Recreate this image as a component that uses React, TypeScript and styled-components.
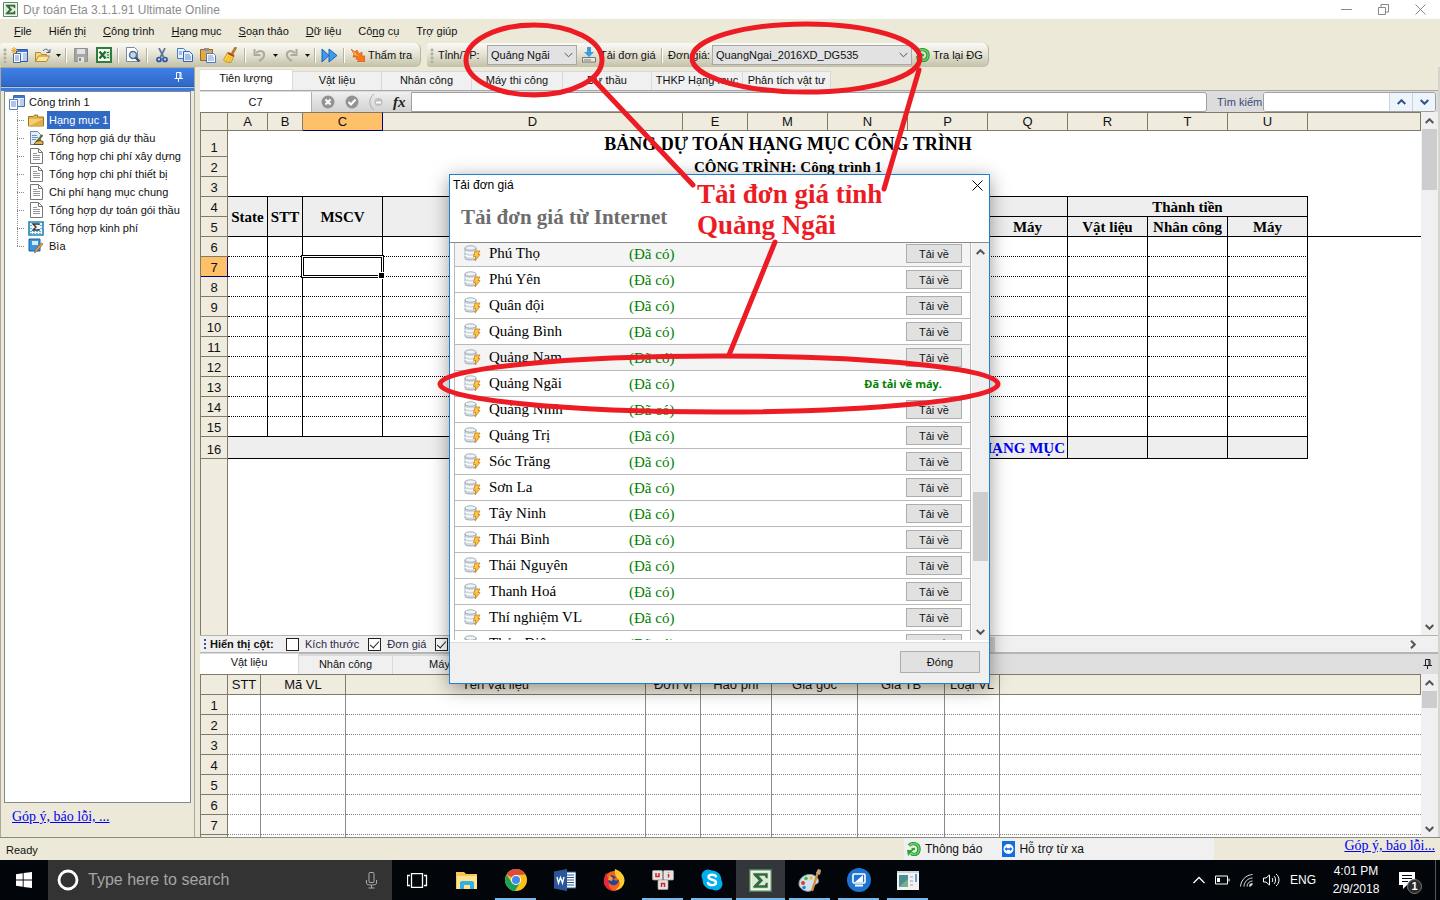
import React from "react";
import styled, { createGlobalStyle, css } from "styled-components";

const sans = '"Liberation Sans", Arial, sans-serif';
const serif = '"Liberation Serif", "Times New Roman", serif';
const beige = "#ece9d8";
const head = "#efebde";
const headLine = "#7f7b66";
const red = "#ed1c24";

const Global = createGlobalStyle`
  * { box-sizing: border-box; }
  html, body { margin: 0; padding: 0; }
  body { font-family: ${sans}; font-size: 11px; color: #111; background: ${beige}; }
  button, input, select { font: inherit; color: inherit; margin: 0; padding: 0; border-radius: 0; }
  button { border: 0; background: none; }
  svg { display: block; flex: none; }
`;

const Screen = styled.div`
  position: relative;
  display: flex;
  flex-direction: column;
  height: 100vh;
  min-height: 700px;
  overflow: hidden;
`;

/* ---------- window frame ---------- */
const TitleBar = styled.header`
  display: flex;
  align-items: center;
  height: 19px;
  padding: 0 14px 0 3px;
  gap: 5px;
  background: #fff;
  color: #8c8c8c;
  font-size: 12px;
`;
const Title = styled.h1`
  flex: 1;
  margin: 0;
  font-size: 12px;
  font-weight: 400;
`;
const WindowButtons = styled.div`
  display: flex;
  gap: 26px;
`;
const MenuBar = styled.nav`
  display: flex;
  align-items: center;
  gap: 17px;
  height: 24px;
  padding-left: 14px;
`;
const MenuItem = styled.button`
  white-space: nowrap;
`;
const Toolbars = styled.div`
  display: flex;
  gap: 6px;
  height: 24px;
`;
const Strip = styled.div`
  display: flex;
  align-items: center;
  height: 24px;
  padding-right: 9px;
  border-radius: 3px 6px 6px 3px;
  border-right: 1px solid #b8b5a0;
  background: linear-gradient(#fbfaf6, #e6e4d6 45%, #c3c1a8);
`;
const Grip = styled.span`
  width: 8px;
  height: 15px;
  flex: none;
  background: radial-gradient(circle at 5px 2px, #b3af9b 1px, transparent 2px) 0 0 / 8px 4px;
`;
const ToolButton = styled.button<{ $w?: number }>`
  display: flex;
  align-items: center;
  justify-content: center;
  width: ${(p) => p.$w ?? 23}px;
  height: 22px;
`;
const Divider = styled.span`
  width: 6px;
  height: 15px;
  flex: none;
  background: linear-gradient(#b5b29d, #b5b29d) 2px 0 / 1px 100% no-repeat,
    linear-gradient(#fff, #fff) 3px 0 / 1px 100% no-repeat;
`;
const TextTool = styled.button<{ $w: number }>`
  display: flex;
  align-items: center;
  gap: 3px;
  width: ${(p) => p.$w}px;
  height: 22px;
  padding-left: 4px;
  white-space: nowrap;
`;
const ToolLabel = styled.label<{ $w: number }>`
  width: ${(p) => p.$w}px;
  padding-left: 3px;
  white-space: nowrap;
`;
const Combo = styled.span<{ $w: number }>`
  position: relative;
  width: ${(p) => p.$w}px;
  height: 20px;
  select {
    appearance: none;
    width: 100%;
    height: 20px;
    padding: 0 16px 0 3px;
    border: 1px solid #a8a8a8;
    background: #e2e2e2;
  }
  svg {
    position: absolute;
    right: 4px;
    top: 7px;
    pointer-events: none;
  }
`;

/* ---------- left panel ---------- */
const Work = styled.div`
  flex: 1;
  min-height: 0;
  display: flex;
  gap: 5px;
  border-bottom: 1px solid #8a8a80;
`;
const Side = styled.aside`
  display: flex;
  flex-direction: column;
  flex: 0 0 195px;
  border: 1px solid #aca899;
  border-bottom: 0;
`;
const SideHead = styled.div`
  display: flex;
  align-items: center;
  justify-content: flex-end;
  height: 19px;
  padding-right: 10px;
  background: linear-gradient(#3f80ea, #3068c4);
  border-bottom: 1px solid #2a5cb0;
`;
const SideStripe = styled.div`
  height: 4px;
  border-top: 1px solid #b8c4d8;
  background: #3a7ce4;
`;
const TreeBox = styled.div`
  flex: 1;
  min-height: 0;
  margin: 0 3px;
  padding: 1px 0 0 4px;
  overflow: hidden;
  background: #fff;
  border: 1px solid #828790;
`;
const TreeRow = styled.div<{ $root?: boolean }>`
  display: flex;
  align-items: center;
  height: 18px;
  gap: ${(p) => (p.$root ? 2 : 3)}px;
  white-space: nowrap;
`;
const Branch = styled.span<{ $last?: boolean }>`
  width: 16px;
  height: 18px;
  flex: none;
  background: repeating-linear-gradient(90deg, #888 0 1px, transparent 1px 2px) 8px 9px / 8px 1px no-repeat,
    repeating-linear-gradient(#888 0 1px, transparent 1px 2px) 8px 0 / 1px ${(p) => (p.$last ? 9 : 18)}px no-repeat;
`;
const TreeIcon = styled.span`
  width: 16px;
  flex: none;
`;
const TreeLabel = styled.span<{ $on?: boolean }>`
  line-height: 18px;
  padding: 0 2px;
  ${(p) => p.$on && css`
    background: #316ac5;
    color: #fff;
  `}
`;
const Feedback = styled.a`
  font-family: ${serif};
  font-size: 14px;
  line-height: 16px;
  color: #0000f0;
  white-space: nowrap;
`;
const SideFoot = styled.div`
  height: 34px;
  padding: 6px 11px;
`;

/* ---------- main column ---------- */
const Main = styled.main`
  flex: 1;
  min-width: 0;
  display: flex;
  flex-direction: column;
  border-right: 2px solid #d6d4cc;
`;
const Tabs = styled.div<{ $gray?: boolean }>`
  display: flex;
  align-items: flex-end;
  height: ${(p) => (p.$gray ? 20 : 23)}px;
  flex: none;
  background: ${(p) => (p.$gray ? "#dedede" : beige)};
`;
const Tab = styled.button<{ $w: number; $on?: boolean }>`
  width: ${(p) => p.$w}px;
  height: ${(p) => (p.$on ? 21 : 19)}px;
  padding: 0 0 ${(p) => (p.$on ? 4 : 2)}px;
  flex: none;
  white-space: nowrap;
  background: ${(p) => (p.$on ? "#fff" : "#f0f0f0")};
  border: 1px solid #d9d9d9;
  border-width: 1px 1px 0 0;
`;
const PinEnd = styled.span`
  margin: 0 5px 5px auto;
`;
const FormulaRow = styled.div`
  display: flex;
  align-items: center;
  height: 22px;
  flex: none;
  background: #dcdcdc;
  border-top: 1px solid #a7a7a7;
  color: #3b4a77;
`;
const NameBox = styled.input`
  width: 112px;
  height: 20px;
  border: 0;
  border-right: 1px solid #b0b0b0;
  background: #fff;
  color: #111;
  text-align: center;
`;
const FormulaTools = styled.div`
  display: flex;
  align-items: center;
  gap: 10px;
  width: 99px;
  height: 20px;
  padding-left: 9px;
  background: linear-gradient(#efefef, #d2d2d2);
`;
const Fx = styled.i`
  font: italic bold 15px/16px ${serif};
  color: #222;
`;
const FormulaInput = styled.input`
  flex: 1;
  min-width: 0;
  height: 20px;
  border: 1px solid #a0a0a0;
  border-radius: 0 3px 3px 0;
  background: #fff;
`;
const SearchLabel = styled.label`
  width: 56px;
  padding-left: 10px;
  white-space: nowrap;
`;
const SearchBox = styled.div`
  display: flex;
  width: 173px;
  height: 20px;
  margin-right: 2px;
  border: 1px solid #a0a0a0;
  border-radius: 3px;
  background: #fff;
  overflow: hidden;
  input {
    flex: 1;
    min-width: 0;
    border: 0;
  }
  button {
    display: flex;
    align-items: center;
    justify-content: center;
    width: 23px;
    border-left: 1px solid #ccd3dd;
    background: #eef4fb;
  }
`;
const SheetFrame = styled.div<{ $bottom?: boolean }>`
  display: flex;
  ${(p) => (p.$bottom ? "flex: 0 0 163px;" : "flex: 1;")}
  min-height: 0;
`;
const Sheet = styled.div`
  flex: 1;
  min-width: 0;
  display: flex;
  flex-direction: column;
  overflow: hidden;
  background: #fff;
  border-left: 1px solid ${headLine};
`;
const Gutter = styled.div`
  flex: 1;
  width: 27px;
  background: ${head};
  border-right: 1px solid ${headLine};
`;
const Grid = styled.table`
  table-layout: fixed;
  width: 100%;
  flex: none;
  border-collapse: separate;
  border-spacing: 0;
  font-size: 13px;
  td, th {
    padding: 0;
    overflow: hidden;
    white-space: nowrap;
    line-height: 18px;
  }
  && th { line-height: 17px; }
`;
const ColHead = styled.th<{ $on?: boolean }>`
  font-weight: 400;
  background: ${(p) => (p.$on ? "#ffc06a" : head)};
  border: solid ${headLine};
  border-width: 1px 1px 1px 0;
  ${(p) => p.$on && "border-right-color: #00007a; border-bottom-color: #00007a;"}
`;
const RowHead = styled.th<{ $on?: boolean }>`
  font-weight: 400;
  vertical-align: bottom;
  background: ${(p) => (p.$on ? "#ffc06a" : head)};
  border: solid ${headLine};
  border-width: 0 1px 1px 0;
  ${(p) => p.$on && "border-right-color: #00007a; border-bottom-color: #00007a;"}
`;
const Row = styled.tr<{ $h?: number }>`
  height: ${(p) => p.$h ?? 20}px;
`;
const Cell = styled.td<{ $line?: string; $right?: boolean; $fill?: boolean; $size?: number; $tint?: string; $end?: boolean }>`
  font-family: ${serif};
  font-weight: 700;
  font-size: ${(p) => p.$size ?? 15}px;
  text-align: ${(p) => (p.$end ? "right" : "center")};
  color: ${(p) => p.$tint ?? "#000"};
  background: ${(p) => (p.$fill ? "#eeeeee" : "#fff")};
  border-bottom: ${(p) => p.$line ?? "0"};
  border-right: ${(p) => (p.$right ? "1px solid #000" : "0")};
  && { padding-right: ${(p) => (p.$end ? 2 : 0)}px; }
`;
const ActiveCell = styled(Cell)`
  && { overflow: visible; }
  position: relative;
  &::before {
    content: "";
    position: absolute;
    inset: -1px;
    border: 1px solid #fff;
    outline: 1px solid #000;
    box-shadow: inset 0 0 0 1px #000;
  }
  &::after {
    content: "";
    position: absolute;
    right: -3px;
    bottom: -3px;
    width: 5px;
    height: 5px;
    background: #000;
    border: 1px solid #fff;
  }
`;
const LightCell = styled.td<{ $open?: boolean }>`
  border-bottom: 1px dotted #808080;
  border-right: ${(p) => (p.$open ? "0" : "1px solid #8a8a8a")};
`;
const VBar = styled.div<{ $w?: number }>`
  display: flex;
  flex-direction: column;
  align-items: center;
  width: ${(p) => p.$w ?? 17}px;
  padding: 0 1px;
  flex: none;
  background: #f0f0f0;
`;
const ArrowBox = styled.button`
  display: flex;
  align-items: center;
  justify-content: center;
  width: 15px;
  height: 17px;
  flex: none;
`;
const Track = styled.div`
  flex: 1;
  width: 100%;
`;
const Thumb = styled.div<{ $top: string; $h: number }>`
  height: ${(p) => p.$h}px;
  margin-top: ${(p) => p.$top};
  background: #cdcdcd;
`;
const FilterRow = styled.div`
  display: flex;
  align-items: center;
  height: 17px;
  flex: none;
  overflow: hidden;
  background: #f0f0f0;
  border-top: 1px solid #b5b5a5;
  white-space: nowrap;
`;
const FilterTools = styled.div`
  display: flex;
  align-items: center;
  flex: 0 0 580px;
  padding-left: 4px;
`;
const FilterTitle = styled.b`
  width: 79px;
  padding-left: 3px;
`;
const Check = styled.label`
  display: flex;
  align-items: center;
  gap: 6px;
  margin-right: 9px;
  color: #2b2b4a;
  input {
    appearance: none;
    position: relative;
    width: 13px;
    height: 13px;
    background: #fff;
    border: 1px solid #222;
  }
  input:checked::after {
    content: "";
    position: absolute;
    left: 3px;
    top: 0;
    width: 4px;
    height: 8px;
    border: solid #222;
    border-width: 0 1px 1px 0;
    transform: rotate(42deg);
  }
`;
const HTrack = styled.div`
  display: flex;
  flex: 1;
  align-items: center;
  justify-content: space-between;
  padding-right: 18px;
`;
const HThumb = styled.div`
  width: 215px;
  height: 15px;
  background: #cdcdcd;
`;
const Splitter = styled.div`
  height: 2px;
  flex: none;
  background: #b5b5b5;
`;

/* ---------- status bar and task bar ---------- */
const StatusBar = styled.footer`
  display: flex;
  height: 22px;
  flex: none;
  padding-left: 6px;
  line-height: 24px;
`;
const StatusText = styled.span`
  flex: 1;
`;
const StatusPane = styled.div`
  display: flex;
  align-items: center;
  gap: 20px;
  width: 310px;
  padding-left: 3px;
  background: #f0f0f0;
  font-size: 12px;
`;
const StatusButton = styled.button`
  display: flex;
  align-items: center;
  gap: 4px;
`;
const StatusLink = styled.div`
  width: 226px;
  padding-right: 5px;
  line-height: 16px;
  text-align: right;
`;
const TaskBar = styled.div`
  display: flex;
  height: 40px;
  flex: none;
  background: #020509;
  color: #fff;
`;
const StartButton = styled.button`
  display: flex;
  align-items: center;
  justify-content: center;
  width: 48px;
`;
const TaskSearch = styled.label`
  display: flex;
  align-items: center;
  gap: 9px;
  width: 344px;
  padding: 0 12px 0 9px;
  background: #333;
  input {
    flex: 1;
    min-width: 0;
    border: 0;
    background: none;
    font-size: 16px;
    &::placeholder { color: #a5a5a5; opacity: 1; }
  }
`;
const TaskButton = styled.button<{ $open?: boolean; $on?: boolean }>`
  position: relative;
  display: flex;
  align-items: center;
  justify-content: center;
  width: 49px;
  background: ${(p) => (p.$on ? "#33373b" : "none")};
  ${(p) => p.$open && css`
    &::after {
      content: "";
      position: absolute;
      bottom: 0;
      left: ${p.$on ? 0 : 4}px;
      right: ${p.$on ? 0 : 4}px;
      height: 2px;
      background: #76b9ed;
    }
  `}
`;
const Apps = styled.div`
  display: flex;
  padding-left: 1px;
`;
const Tray = styled.div`
  display: flex;
  align-items: center;
  gap: 10px;
  margin-left: auto;
  padding-right: 4px;
  font-size: 12px;
`;
const Clock = styled.time`
  width: 60px;
  line-height: 18px;
  text-align: center;
`;
const Notice = styled.span`
  position: relative;
  width: 40px;
  height: 40px;
  padding: 12px 0 0 3px;
  border-right: 1px solid #55585c;
  b {
    position: absolute;
    left: 11px;
    top: 19px;
    width: 15px;
    height: 15px;
    border-radius: 8px;
    border: 1px solid #777;
    background: #2a2a2a;
    font-size: 11px;
    line-height: 13px;
    text-align: center;
  }
`;

/* ---------- dialog and mark-up over the page ---------- */
const Overlay = styled.div`
  position: absolute;
  inset: 0 0 40px;
  display: flex;
  align-items: center;
  justify-content: center;
  padding: 0 1px 2px 0;
`;
const Dialog = styled.section`
  display: flex;
  flex-direction: column;
  width: 541px;
  height: 510px;
  border: 1px solid #1f7fd0;
  background: #fff;
  box-shadow: 0 4px 18px rgba(0, 0, 0, 0.4);
`;
const DialogBar = styled.div`
  display: flex;
  align-items: center;
  justify-content: space-between;
  height: 20px;
  padding: 0 6px 0 3px;
  font-size: 12px;
  color: #000;
`;
const DialogTitle = styled.h2`
  height: 48px;
  margin: 0;
  padding: 10px 11px 0;
  font: bold 21px/24px ${serif};
  color: #6d6d6d;
  border-bottom: 1px solid #8a8a8a;
`;
const ListFrame = styled.div`
  display: flex;
  height: 397px;
  padding-left: 4px;
  overflow: hidden;
`;
const List = styled.ul`
  flex: 1;
  display: flex;
  flex-direction: column;
  margin: 0 1px 0 0;
  padding: 0;
  list-style: none;
  overflow: hidden;
  border: solid #b9b9b9;
  border-width: 0 1px;
`;
const Item = styled.li<{ $tone?: boolean }>`
  display: flex;
  align-items: center;
  flex: none;
  height: 26px;
  padding: 0 8px 0 9px;
  background: ${(p) => (p.$tone ? "#f4f4f4" : "#fff")};
  border-bottom: 1px solid #b9b9b9;
  font: 15px/22px ${serif};
  color: #000;
  &:first-child {
    height: 24px;
    padding-bottom: 2px;
  }
`;
const ItemName = styled.span`
  width: 148px;
  padding: 0 0 2px 8px;
`;
const ItemState = styled.span`
  flex: 1;
  color: #008000;
`;
const PushButton = styled.button<{ $w: number; $h: number }>`
  width: ${(p) => p.$w}px;
  height: ${(p) => p.$h}px;
  font: 11px/16px ${sans};
  color: #111;
  background: #e1e1e1;
  border: 1px solid #adadad;
`;
const Done = styled.strong`
  padding-right: 20px;
  font: bold 11px/16px "Open Sans", ${sans};
  color: #008000;
`;
const DialogFoot = styled.div`
  display: flex;
  justify-content: flex-end;
  flex: 1;
  margin-top: 2px;
  padding: 8px 9px;
  background: #f0f0f0;
  border-top: 1px solid #dcdcdc;
`;
const Ink = styled.svg`
  position: absolute;
  left: 50%;
  top: 0;
  margin-left: -720px;
  pointer-events: none;
`;
const InkNote = styled.p`
  position: absolute;
  left: 50%;
  top: 179px;
  width: 200px;
  margin: 0 0 0 -23px;
  font: bold 27px/31px ${serif};
  color: ${red};
`;

/* ---------- drawings ---------- */
const Sigma = ({ s = 16 }: { s?: number }) => (
  <svg width={s} height={s} viewBox="0 0 16 16">
    <path d="M.5.5h15v15H.5z" fill="#f3f7ee" stroke="#4c8054" />
    <path d="M2 2h12v12H2z" fill="#dfe8d6" />
    <path d="M3 3h10v3.500h-1.200L11 4.700H6.800L9.800 8l-3.300 3.300H11l.8-1.800H13V13H3v-1L6.800 8 3 4z" fill="#2f6b3c" />
  </svg>
);
const Chev = ({ up, c = "#555", w = 9, sw = 2 }: { up?: boolean; c?: string; w?: number; sw?: number }) => (
  <svg width={w} height="6" viewBox="0 0 9 6" fill="none" stroke={c} strokeWidth={sw}>
    <path d={up ? "M.7 5 4.500 1.200 8.300 5" : "M.7 1 4.500 4.800 8.300 1"} />
  </svg>
);
const Caret = () => (
  <svg width="5" height="3"><path d="M0 0h5L2.500 3z" fill="#111" /></svg>
);
const Pin = ({ c }: { c: string }) => (
  <svg width="10" height="10" fill="none" stroke={c}>
    <path d="M2.500 .5h4.500v5.500M2.500 .5v5.500M6 .5v5.500M.5 6.500h8.500M4.500 7v3" />
  </svg>
);
const Project = () => (
  <svg width="16" height="16">
    <path d="M4.500 1.500h11v11h-11z" fill="#e8f0fc" stroke="#4469ab" />
    <path d="M5 2h10v2H5z" fill="#3d75d6" />
    <path d="M11 5h4v7h-4z" fill="#b9cdec" />
    <path d="M.5 5.500h8v10h-8z" fill="#fff" stroke="#5a7db4" />
    <path d="M2 8h5M2 10h5M2 12h5" stroke="#5d8bd8" />
  </svg>
);
const NewProject = () => (
  <svg width="17" height="16">
    <path d="M5.500 2.500h11v12h-11z" fill="#e8f0fc" stroke="#35579a" />
    <path d="M6 3h10v2H6z" fill="#3d75d6" />
    <path d="M12 6h4v8h-4z" fill="#b9cdec" />
    <path d="M2.500 6.500h7v9h-7z" fill="#fff" stroke="#4469ab" />
    <path d="M4 9h4M4 11h4M4 13h4" stroke="#5d8bd8" />
    <path d="M3 0v7M0 3.500h7M1 1l4 5M5 1 1 6" stroke="#f1a522" />
  </svg>
);
const FolderOpen = () => (
  <svg width="17" height="15">
    <path d="M1.500 13.500v-9h5l1 2h5v2" fill="#f7d77e" stroke="#b98a2c" />
    <path d="M1.500 13.500 4.500 8h11l-3 5.500z" fill="#fbe7a4" stroke="#b98a2c" />
    <path d="M9 3c2-3 5-2 6 1m1-3v3.500h-3.500" fill="none" stroke="#4d5d7a" />
  </svg>
);
const Save = () => (
  <svg width="14" height="14">
    <path d="M.5.5h13v13H.5z" fill="#a5a5a5" stroke="#909090" />
    <path d="M3 1h8v5H3zM4 9h6v5H4z" fill="#e2e2e2" /><path d="M5 10h2v3H5z" fill="#888" />
  </svg>
);
const Excel = () => (
  <svg width="16" height="16">
    <path d="M1 1h14v14H1z" fill="#fff" stroke="#2f7d3b" strokeWidth="2" />
    <path d="M9 4h5v8H9z" fill="#cfe6cf" />
    <path d="m3.500 4.500 6 7m0-7-6 7" stroke="#22702f" strokeWidth="2.400" />
    <path d="M11 5.500h2M11 8h2M11 10.500h2" stroke="#2f7d3b" />
  </svg>
);
const Preview = () => (
  <svg width="16" height="16">
    <path d="M1.500.5h8l3 3v11h-11z" fill="#fff" stroke="#7b8aa3" />
    <circle cx="8" cy="8" r="3.500" fill="#b9dcf4" stroke="#5a6f8d" strokeWidth="1.500" />
    <path d="m10.500 10.500 4 4" stroke="#3d4e69" strokeWidth="2.400" />
  </svg>
);
const Cut = () => (
  <svg width="12" height="15" fill="none">
    <path d="M3 0 7.500 9M9 0 4.500 9" stroke="#5f7596" strokeWidth="1.700" />
    <circle cx="3" cy="11.500" r="2" stroke="#2858ad" strokeWidth="1.700" /><circle cx="9" cy="11.500" r="2" stroke="#2858ad" strokeWidth="1.700" />
  </svg>
);
const Copy = () => (
  <svg width="16" height="14">
    <path d="M.5.5h6l2 2v8h-8z" fill="#e6effc" stroke="#4d78bf" />
    <path d="M6.500 3.500h6l3 3v7h-9z" fill="#e6effc" stroke="#3564b4" />
    <path d="M2 4h3M2 6h3M8 7h5M8 9h6M8 11h6" stroke="#5d8bd8" />
  </svg>
);
const Paste = () => (
  <svg width="16" height="15">
    <path d="M.5 1.500h12v11H.5z" fill="#e2a94b" stroke="#96671f" /><path d="M4 0h5v3H4z" fill="#8592a8" />
    <path d="M6.500 5.500h7l2 2v7h-9z" fill="#fff" stroke="#4d78bf" /><path d="M8 8h5M8 10h6M8 12h6" stroke="#6a94d8" />
  </svg>
);
const Broom = () => (
  <svg width="15" height="16">
    <path d="m13 0-4 7" stroke="#b7792d" strokeWidth="2.600" />
    <path d="M4.500 5.500 11 9 8 15.500 3 15 .5 13z" fill="#fbd94e" stroke="#c99612" /><path d="m5 6 6 3" stroke="#c43e20" strokeWidth="2" />
    <path d="m6 9-3 5M8 10l-2 5" stroke="#e0a81c" />
  </svg>
);
const Undo = ({ flip }: { flip?: boolean }) => (
  <svg width="13" height="14">
    <g transform={flip ? "matrix(-1 0 0 1 13 0)" : undefined} fill="none" stroke="#adaa9b" strokeWidth="2">
      <path d="M3 5c5-4 9-1 8 3-.5 2-2 3.500-5 5" /><path d="M1.500 1v6h6" />
    </g>
  </svg>
);
const Forward = () => (
  <svg width="17" height="15" fill="#3f9bf0" stroke="#1960b8">
    <path d="M1 1v13l7-6.500zM8 1v13l8-6.500z" />
  </svg>
);
const Verify = () => (
  <svg width="14" height="13">
    <path d="m0 0 4 3 2-2 2 4 3-2v4l3 0v6H6l2-2-3-1 1-2H2l1-3z" fill="#f57a1e" stroke="#d8481a" strokeWidth=".6" /><path d="m1 1 5 5 2 1-4-1z" fill="#ffd24a" />
  </svg>
);
const Download = () => (
  <svg width="16" height="16">
    <path d="M6 0h4v5h3L8 10 3 5h3z" fill="#3b9ee0" /><path d="M1.500 10.500h13v4.500h-13z" fill="#e9e9e3" stroke="#777" /><path d="M3 13h7" stroke="#777" />
  </svg>
);
const Refresh = () => (
  <svg width="14" height="14" fill="none">
    <path d="M2 3.500C5 .5 12 1 12 7s-5 6-8 4.500" stroke="#1f9429" strokeWidth="3.400" />
    <path d="M2 3.500C5 .5 12 1 12 7s-5 6-8 4.500" stroke="#62d264" strokeWidth="1.600" />
    <path d="M4.500 7H8" stroke="#2aa733" strokeWidth="2.400" />
    <path d="M0 8h6.500L1 14z" fill="#2aa733" />
  </svg>
);
const Folder = () => (
  <svg width="16" height="13"><path d="M.5 2.500h5l1-1.500h3v2h6v9H.5z" fill="#e2b44c" stroke="#9c7423" /><path d="M1 5h14v7H1z" fill="#f3cf73" /><path d="m1 12 14-7v7z" fill="#dfae45" /></svg>
);
const Doc = () => (
  <svg width="16" height="16"><path d="M2.500.5h8l4 4v11h-12z" fill="#fff" stroke="#777" /><path d="M10.500.5v4h4" fill="none" stroke="#777" /><path d="M5 5.500h4M5 7.500h7M5 9.500h7M5 11.500h7" stroke="#999" /></svg>
);
const DocPen = () => (
  <svg width="16" height="15"><path d="M2.500.5h7l3 3v10h-10z" fill="#e3ecf8" stroke="#6d85a8" /><path d="M4 4.500h5M4 6.500h6M4 8.500h4" stroke="#6d93c9" /><path d="m14.500 4-6 7" stroke="#6a6a3a" strokeWidth="2" /><path d="M6 13.500h9v-3l-3-1-4 1z" fill="#e1b640" stroke="#54502c" /></svg>
);
const SumDoc = () => (
  <svg width="16" height="15"><path d="M1 1h14v13H1z" fill="#eef6fc" stroke="#2186b5" strokeWidth="1.600" /><path d="M2 10.500h12M2 12.500h12M2 4.500h2m8 0h2M2 7.500h2m8 0h2" stroke="#6ab0dc" strokeDasharray="2 1" /><path d="M11 4V3H5l3 3-3 3h6V8" fill="none" stroke="#333" strokeWidth="1.400" /></svg>
);
const Book = () => (
  <svg width="16" height="16"><path d="M1 1h11v12H1z" fill="#3a96dc" stroke="#1d5f9e" /><path d="M4 3h6v4H4z" fill="#d5ebfa" /><path d="m15 6-6 7-2.500 2 .8-3 6-7z" fill="#f6a24b" stroke="#8b5a2a" strokeWidth=".7" /></svg>
);
const Database = () => (
  <svg width="17" height="17">
    <path d="M1 3v10.500C2 15.500 11 15.500 12 13.500V3z" fill="#d3dbe2" stroke="#8e9ba6" strokeWidth=".8" />
    <ellipse cx="6.500" cy="3" rx="5.500" ry="2.200" fill="#eef3f6" stroke="#8e9ba6" strokeWidth=".8" />
    <path d="M1 6.500c1 2 10 2 11 0M1 10c1 2 10 2 11 0" fill="none" stroke="#fff" strokeWidth="1.300" />
    <path d="M11 6h5l-2 3.500h2L11 16l.8-4.500H9.500z" fill="#fbc640" stroke="#cf7d1b" strokeWidth=".8" />
  </svg>
);
const Close = ({ c = "#000", s = 11 }: { c?: string; s?: number }) => (
  <svg width={s} height={s} viewBox="0 0 11 11" stroke={c}><path d="m.5.5 10 10m0-10-10 10" /></svg>
);
const Viewer = () => (
  <svg width="13" height="16"><path d="M0 0h13v16H0z" fill="#0f6fe0" /><circle cx="6.500" cy="8" r="5" fill="#fff" /><path d="m2.500 8 2.500-2v1.300h3V6l2.500 2L8 10V8.700H5V10z" fill="#0f6fe0" /></svg>
);
const icons: Record<string, React.ReactNode> = {
  view: <svg width="21" height="15" fill="none" stroke="#fff"><path d="M4.500.5h11v14h-11zM3 2.500H.5v10H3M17 2.500h2.500v10H17" strokeWidth="1.300" /></svg>,
  files: <svg width="22" height="19"><path d="M0 1h8l2 2h11v15H0z" fill="#f5c74c" /><path d="M1 5h20v13H1z" fill="#fde491" /><path d="M4 18v-7l2-1h10l2 1v7h-4v-4H8v4z" fill="#35aee4" /></svg>,
  chrome: <svg width="22" height="22"><circle cx="11" cy="11" r="11" fill="#fbc116" /><path d="M11 11 1.500 5.500A11 11 0 0 1 20.500 5.500L11 6z" fill="#dd4b3e" /><path d="M1.500 5.500A11 11 0 0 0 10 22l5-8.500-8.500-.5z" fill="#1ba05a" /><circle cx="11" cy="11" r="5" fill="#fff" /><circle cx="11" cy="11" r="4" fill="#4688f1" /></svg>,
  word: <svg width="22" height="22"><path d="M11 3h11v16H11z" fill="#fff" stroke="#2b579a" /><path d="M13 6h7M13 8.500h7M13 11h7M13 13.500h7M13 16h7" stroke="#2b579a" /><path d="M0 2.500 13 0v22L0 19.500z" fill="#2b579a" /><path d="m3 8 1.500 6L6.500 8.500 8.500 14 10 8" fill="none" stroke="#fff" strokeWidth="1.400" /></svg>,
  fox: <svg width="22" height="22"><circle cx="11" cy="12" r="10" fill="#f5601e" /><path d="M12 0c6 2 10 7 9.500 12S17 21 12 21c5-3 6-7 3-11-2-3-4-5-3-10z" fill="#ffcb2d" /><path d="M3 3c0 3-3 6-2 11s6 8 10 8c-5-3-6-6-5-9z" fill="#e8263d" /><path d="M6 7c3-2 6 0 7 2l-3 1c3 3 6 1 6 0 0 5-4 7-7 6s-5-5-3-9z" fill="#20469c" /><path d="m6 6 4 3-1 3-4-1z" fill="#ff9a25" /></svg>,
  keys: <svg width="22" height="20" fill="#e6e3e3" stroke="#a9a5a5" strokeWidth=".7"><rect x=".5" y=".5" width="10" height="9.500" rx="1" /><rect x="11.500" y=".5" width="10" height="9.500" rx="1" /><rect x="6" y="10" width="10" height="9.500" rx="1" /><path d="M4 3v3.500h3V3M16.500 4v3.500M16.500 2.200v.6M9.500 17v-3.500h3V17" fill="none" stroke="#d6202a" strokeWidth="1.500" /></svg>,
  skype: <svg width="22" height="22"><circle cx="7" cy="7" r="6.500" fill="#00aff0" /><circle cx="15" cy="15" r="6.500" fill="#00aff0" /><circle cx="11" cy="11" r="9.500" fill="#00aff0" /><path d="M15 7.500C14 5 7.500 5 7.500 8c0 3.500 7.500 2 7.500 5.500 0 3.500-7 3.200-8 .5" fill="none" stroke="#fff" strokeWidth="2.400" strokeLinecap="round" /></svg>,
  sigma: <Sigma s={23} />,
  paint: <svg width="24" height="23"><path d="M1 15C1 8 9 4 15 6s7 8 3 9c-3 1-3 2-3 4s-3 4-7 3-7-4-7-7z" fill="#cfe2ec" stroke="#8aa9b9" /><circle cx="5" cy="14" r="2" fill="#d93a2b" /><circle cx="8" cy="9.500" r="1.800" fill="#4db04a" /><circle cx="13" cy="9" r="1.800" fill="#eec22f" /><circle cx="6" cy="18.500" r="1.800" fill="#3c7bd0" /><path d="m20 3-6 19" stroke="#d78b3d" strokeWidth="2.400" /><path d="m18 4 2-4 3 1-1 5z" fill="#c9a57d" /></svg>,
  remote: <svg width="24" height="24"><circle cx="12" cy="12" r="12" fill="#1f74d0" /><rect x="6" y="6" width="12" height="9" rx="1" fill="none" stroke="#fff" strokeWidth="1.600" /><path d="m8 14 8-7v7z" fill="#fff" /><path d="M8 17.500h8" stroke="#fff" strokeWidth="2" /></svg>,
  panel: <svg width="22" height="19"><path d="M0 0h22v19H0z" fill="#f2f2f2" /><path d="M0 0h22v2H0z" fill="#c9d6dc" /><path d="M2 4h9v12H2z" fill="#4d8d96" /><path d="m2 16 9-8v8z" fill="#78b08b" /><path d="M13 6h3M13 10h3M13 14h3" stroke="#c8c8c8" strokeWidth="2" /><path d="M19 3v8" stroke="#2e83d6" strokeWidth="1.500" /></svg>,
};

/* ---------- data ---------- */
const menus = [["", "F", "ile"], ["Hiển ", "t", "hị"], ["", "C", "ông trình"], ["", "H", "ạng mục"], ["", "S", "oạn thảo"], ["", "D", "ữ liệu"], ["Cô", "n", "g cụ"], ["Trợ ", "g", "iúp"]];
const tree: [string, React.ReactNode][] = [
  ["Hạng mục 1", <Folder />], ["Tổng hợp giá dự thầu", <DocPen />], ["Tổng hợp chi phí xây dựng", <Doc />], ["Tổng hợp chi phí thiết bị", <Doc />],
  ["Chi phí hạng mục chung", <Doc />], ["Tổng hợp dự toán gói thầu", <Doc />], ["Tổng hợp kinh phí", <SumDoc />], ["Bìa", <Book />],
];
const sheetTabs: [string, number][] = [["Tiên lượng", 93], ["Vật liệu", 89], ["Nhân công", 90], ["Máy thi công", 91], ["Dự thầu", 89], ["THKP Hạng mục", 91], ["Phân tích vật tư", 88]];
const cols: [string, number][] = [["A", 40], ["B", 35], ["C", 80], ["D", 300], ["E", 65], ["M", 80], ["N", 80], ["P", 80], ["Q", 80], ["R", 80], ["T", 80], ["U", 80]];
const matCols: [string, number][] = [["STT", 33], ["Mã VL", 85], ["Tên vật liệu", 300], ["Đơn vị", 55], ["Hao phí", 71], ["Giá gốc", 86], ["Giá TB", 87], ["Loại VL", 55]];
const provinces = ["Phú Thọ", "Phú Yên", "Quân đội", "Quảng Bình", "Quảng Nam", "Quảng Ngãi", "Quảng Ninh", "Quảng Trị", "Sóc Trăng", "Sơn La", "Tây Ninh", "Thái Bình", "Thái Nguyên", "Thanh Hoá", "Thí nghiệm VL", "Thủy Điện"];
const apps: [string, string, boolean][] = [["view", "Task View", false], ["files", "File Explorer", false], ["chrome", "Chrome", true], ["word", "Word", false], ["fox", "Firefox", false], ["keys", "UniKey", true], ["skype", "Skype", true], ["sigma", "Eta", true], ["paint", "Paint", true], ["remote", "Remote", true], ["panel", "Panel", true]];

const ScrollV = ({ top = "0px", h, w }: { top?: string; h: number; w?: number }) => (
  <VBar $w={w}>
    <ArrowBox aria-label="Lên"><Chev up /></ArrowBox>
    <Track><Thumb $top={top} $h={h} /></Track>
    <ArrowBox aria-label="Xuống"><Chev /></ArrowBox>
  </VBar>
);

const black = "1px solid #000";
const dots = "1px dotted #000";

const Estimate = () => (
  <Grid>
    <colgroup>
      <col style={{ width: 27 }} />
      {cols.map(([n, w]) => <col key={n} style={{ width: w }} />)}
      <col />
    </colgroup>
    <thead>
      <tr>
        <ColHead />
        {cols.map(([n]) => <ColHead key={n} $on={n === "C"}>{n}</ColHead>)}
        <ColHead />
      </tr>
    </thead>
    <tbody>
      <Row $h={26}><RowHead>1</RowHead><Cell /><Cell colSpan={11} $size={18}>BẢNG DỰ TOÁN HẠNG MỤC CÔNG TRÌNH</Cell><Cell /></Row>
      <Row><RowHead>2</RowHead><Cell /><Cell colSpan={11}>CÔNG TRÌNH: Công trình 1</Cell><Cell /></Row>
      <Row><RowHead>3</RowHead><Cell colSpan={12} $line={black} /><Cell /></Row>
      <Row>
        <RowHead>4</RowHead>
        {["State", "STT", "MSCV", "", "", ""].map((t, i) => <Cell key={i} rowSpan={2} $fill $right $line={black}>{t}</Cell>)}
        <Cell colSpan={3} $fill $right $line={black} />
        <Cell colSpan={3} $fill $right $line={black}>Thành tiền</Cell>
        <Cell />
      </Row>
      <Row>
        <RowHead>5</RowHead>
        {["", "", "Máy", "Vật liệu", "Nhân công", "Máy"].map((t, i) => <Cell key={i} $fill $right $line={black}>{t}</Cell>)}
        <Cell $line={black} />
      </Row>
      {Array.from({ length: 10 }, (_, r) => (
        <Row key={r}>
          <RowHead $on={r === 1}>{r + 6}</RowHead>
          {cols.map(([n]) => {
            const C = r === 1 && n === "C" ? ActiveCell : Cell;
            return <C key={n} $right $line={r === 9 ? black : dots} />;
          })}
          <Cell />
        </Row>
      ))}
      <Row $h={22}>
        <RowHead>16</RowHead>
        <Cell colSpan={9} $fill $right $end $line={black} $tint="#0000f0">TỔNG CỘNG HẠNG MỤC</Cell>
        <Cell $fill $right $line={black} /><Cell $fill $right $line={black} /><Cell $fill $right $line={black} /><Cell />
      </Row>
    </tbody>
  </Grid>
);

const Materials = () => (
  <Grid>
    <colgroup>
      <col style={{ width: 27 }} />
      {matCols.map(([n, w]) => <col key={n} style={{ width: w }} />)}
      <col />
    </colgroup>
    <thead>
      <Row $h={21}>
        <ColHead />
        {matCols.map(([n]) => <ColHead key={n}>{n}</ColHead>)}
        <ColHead />
      </Row>
    </thead>
    <tbody>
      {Array.from({ length: 8 }, (_, r) => (
        <Row key={r}>
          <RowHead>{r < 7 && r + 1}</RowHead>
          {matCols.map(([n]) => <LightCell key={n} />)}
          <LightCell $open />
        </Row>
      ))}
    </tbody>
  </Grid>
);

export default function App() {
  return (
    <Screen>
      <Global />
      <TitleBar>
        <Sigma s={15} />
        <Title>Dự toán Eta 3.1.1.91 Ultimate Online</Title>
        <WindowButtons>
          <button aria-label="Thu nhỏ"><svg width="11" height="11" stroke="#888"><path d="M0 5.500h11" /></svg></button>
          <button aria-label="Khôi phục"><svg width="11" height="11" fill="none" stroke="#888"><path d="M.5 3.500h7v7h-7zM3 3V.5h7.500V8H8" /></svg></button>
          <button aria-label="Đóng cửa sổ"><Close c="#888" /></button>
        </WindowButtons>
      </TitleBar>
      <MenuBar>
        {menus.map(([a, u, b]) => <MenuItem key={u + b}>{a}<u>{u}</u>{b}</MenuItem>)}
      </MenuBar>
      <Toolbars>
        <Strip>
          <Grip />
          <ToolButton aria-label="Tạo mới"><NewProject /></ToolButton>
          <ToolButton aria-label="Mở"><FolderOpen /></ToolButton>
          <ToolButton $w={9} aria-label="Mở gần đây"><Caret /></ToolButton>
          <Divider />
          <ToolButton aria-label="Lưu"><Save /></ToolButton>
          <ToolButton aria-label="Xuất Excel"><Excel /></ToolButton>
          <Divider />
          <ToolButton aria-label="Xem trước"><Preview /></ToolButton>
          <Divider />
          <ToolButton aria-label="Cắt"><Cut /></ToolButton>
          <ToolButton aria-label="Sao chép"><Copy /></ToolButton>
          <ToolButton aria-label="Dán"><Paste /></ToolButton>
          <ToolButton aria-label="Xoá"><Broom /></ToolButton>
          <Divider />
          <ToolButton aria-label="Hoàn tác"><Undo /></ToolButton>
          <ToolButton $w={9} aria-label="Danh sách hoàn tác"><Caret /></ToolButton>
          <ToolButton aria-label="Làm lại"><Undo flip /></ToolButton>
          <ToolButton $w={9} aria-label="Danh sách làm lại"><Caret /></ToolButton>
          <Divider />
          <ToolButton aria-label="Chạy"><Forward /></ToolButton>
          <Divider />
          <TextTool $w={64}><Verify />Thẩm tra</TextTool>
        </Strip>
        <Strip>
          <Grip />
          <ToolLabel $w={52} htmlFor="province">Tỉnh/TP:</ToolLabel>
          <Combo $w={90}>
            <select id="province"><option>Quảng Ngãi</option></select>
            <Chev sw={1} />
          </Combo>
          <TextTool $w={82}><Download />Tải đơn giá</TextTool>
          <Divider />
          <ToolLabel $w={47} htmlFor="price">Đơn giá:</ToolLabel>
          <Combo $w={200}>
            <select id="price"><option>QuangNgai_2016XD_DG535</option></select>
            <Chev sw={1} />
          </Combo>
          <TextTool $w={67}><Refresh />Tra lại ĐG</TextTool>
        </Strip>
      </Toolbars>

      <Work>
        <Side>
          <SideHead><Pin c="#fff" /></SideHead>
          <SideStripe />
          <TreeBox>
            <TreeRow $root><Project /><TreeLabel>Công trình 1</TreeLabel></TreeRow>
            {tree.map(([t, icon], i) => (
              <TreeRow key={t}>
                <Branch $last={i === tree.length - 1} />
                <TreeIcon>{icon}</TreeIcon>
                <TreeLabel $on={i === 0}>{t}</TreeLabel>
              </TreeRow>
            ))}
          </TreeBox>
          <SideFoot><Feedback href="#feedback">Góp ý, báo lỗi, ...</Feedback></SideFoot>
        </Side>

        <Main>
          <Tabs>
            {sheetTabs.map(([t, w], i) => <Tab key={t} $w={w} $on={i === 0}>{t}</Tab>)}
          </Tabs>
          <FormulaRow>
            <NameBox aria-label="Ô hiện tại" defaultValue="C7" />
            <FormulaTools>
              <svg width="14" height="14"><circle cx="7" cy="7" r="6.500" fill="#939393" /><path d="m4.500 4.500 5 5m0-5-5 5" stroke="#fff" strokeWidth="2" /></svg>
              <svg width="14" height="14"><circle cx="7" cy="7" r="6.500" fill="#939393" /><path d="m3.500 7 2.500 2.500 4.500-5" fill="none" stroke="#fff" strokeWidth="2" /></svg>
              <svg width="14" height="18"><path d="M5 1C-.5 5-.5 13 5 17" fill="none" stroke="#aaa" /><circle cx="9.500" cy="9" r="4" fill="#bdbdc4" /><path d="M7 9.500h5" stroke="#fff" strokeWidth="2" /></svg>
              <Fx>fx</Fx>
            </FormulaTools>
            <FormulaInput aria-label="Công thức" />
            <SearchLabel htmlFor="find">Tìm kiếm</SearchLabel>
            <SearchBox>
              <input id="find" />
              <button aria-label="Tìm trước"><Chev up c="#34528f" w={11} sw={2} /></button>
              <button aria-label="Tìm tiếp"><Chev c="#34528f" w={11} sw={2} /></button>
            </SearchBox>
          </FormulaRow>
          <SheetFrame>
            <Sheet><Estimate /><Gutter /></Sheet>
            <ScrollV h={61} />
          </SheetFrame>
          <FilterRow>
            <FilterTools>
              <svg width="3" height="12" fill="#34528f"><path d="M0 1h2v2H0zM0 5h2v2H0zM0 9h2v2H0z" /></svg>
              <FilterTitle>Hiển thị cột:</FilterTitle>
              <Check>
                <input type="checkbox" />Kích thước
              </Check>
              <Check>
                <input type="checkbox" defaultChecked />Đơn giá
              </Check>
              <Check>
                <input type="checkbox" defaultChecked aria-label="Thành tiền" />
              </Check>
            </FilterTools>
            <HTrack>
              <HThumb />
              <ArrowBox aria-label="Sang phải"><svg width="6" height="9" fill="none" stroke="#555" strokeWidth="2"><path d="M1 .7 4.800 4.500 1 8.300" /></svg></ArrowBox>
            </HTrack>
          </FilterRow>
          <Splitter />
          <Tabs $gray>
            <Tab $w={99} $on>Vật liệu</Tab>
            <Tab $w={94}>Nhân công</Tab>
            <Tab $w={94}>Máy</Tab>
            <PinEnd><Pin c="#222" /></PinEnd>
          </Tabs>
          <SheetFrame $bottom>
            <Sheet><Materials /></Sheet>
            <ScrollV h={17} />
          </SheetFrame>
        </Main>
      </Work>

      <StatusBar>
        <StatusText>Ready</StatusText>
        <StatusPane>
          <StatusButton><Refresh />Thông báo</StatusButton>
          <StatusButton><Viewer />Hỗ trợ từ xa</StatusButton>
        </StatusPane>
        <StatusLink><Feedback href="#feedback">Góp ý, báo lỗi...</Feedback></StatusLink>
      </StatusBar>

      <TaskBar>
        <StartButton aria-label="Start"><svg width="16" height="16" fill="#fff"><path d="M0 2.200 6.700 1.300v6.200H0zM7.600 1.100 16 0v7.500H7.600zM0 8.500h6.700v6.200L0 13.800zM7.600 8.500H16V16l-8.400-1.100z" /></svg></StartButton>
        <TaskSearch>
          <svg width="22" height="22" fill="none"><circle cx="11" cy="11" r="9" stroke="#fff" strokeWidth="2.800" /></svg>
          <input placeholder="Type here to search" aria-label="Type here to search" />
          <svg width="17" height="17" fill="none" stroke="#aaa"><rect x="6" y=".5" width="5" height="10" rx="1" /><path d="M3.500 8v3.500c0 2 10 2 10 0V8M8.500 13v3M5.500 16h6" /></svg>
        </TaskSearch>
        <Apps>
          {apps.map(([k, label, open]) => (
            <TaskButton key={k} aria-label={label} $open={open} $on={k === "sigma"}>{icons[k]}</TaskButton>
          ))}
        </Apps>
        <Tray>
          <svg width="12" height="8" fill="none" stroke="#fff" strokeWidth="1.300"><path d="m.5 7 5.500-5.500L11.500 7" /></svg>
          <svg width="15" height="10" fill="none" stroke="#fff"><path d="M.5 1h12v8H.5zM14 3.500v3" /><path d="M2 3h3v4H2z" fill="#fff" stroke="none" /></svg>
          <svg width="13" height="13" fill="none" stroke="#ddd"><path d="M.5 12.500C1 6 6 1 12.500.5M4 12.500C4 8 8 4 12.500 4M7 12.500c0-3 2.500-5.500 5.500-5.500" /><path d="M10 12.500c0-2 1-2.500 2.500-2.500" strokeWidth="2" /></svg>
          <svg width="17" height="14" fill="none" stroke="#fff"><path d="M.5 5h2.500l3.500-3v10L3 9H.5zM9 5c1 1 1 3 0 4M11 3c2 2 2 6 0 8M13 1c4 3 4 9 0 12" /></svg>
          <span>ENG</span>
          <Clock>4:01 PM<br />2/9/2018</Clock>
          <Notice>
            <svg width="16" height="17"><path d="M0 0h16v13H8l-4 4v-4H0z" fill="#fff" /><path d="M3 3.500h10M3 6.500h10M3 9.500h6" stroke="#020509" /></svg>
            <b>1</b>
          </Notice>
        </Tray>
      </TaskBar>

      <Overlay>
        <Dialog role="dialog" aria-label="Tải đơn giá">
          <DialogBar>Tải đơn giá<button aria-label="Đóng hộp thoại"><Close /></button></DialogBar>
          <DialogTitle>Tải đơn giá từ Internet</DialogTitle>
          <ListFrame>
            <List>
              {provinces.map((p, i) => (
                <Item key={p} $tone={i === 0 || i === 4}>
                  <Database />
                  <ItemName>{p}</ItemName>
                  <ItemState>(Đã có)</ItemState>
                  {p === "Quảng Ngãi" ? <Done>Đã tải về máy.</Done> : <PushButton $w={56} $h={19}>Tải về</PushButton>}
                </Item>
              ))}
            </List>
            <ScrollV w={17} top="232px" h={69} />
          </ListFrame>
          <DialogFoot><PushButton $w={80} $h={22}>Đóng</PushButton></DialogFoot>
        </Dialog>
      </Overlay>

      <Ink width="1440" height="900" fill="none" stroke={red} strokeWidth="5" strokeLinecap="round">
        <ellipse cx="534" cy="60" rx="68" ry="35" />
        <ellipse cx="806" cy="58" rx="114" ry="34" />
        <ellipse cx="719" cy="384" rx="279" ry="28" />
        <path d="M594 80 693 185M919 70 884 189M775 242 729 355" />
      </Ink>
      <InkNote>Tải đơn giá tỉnh Quảng Ngãi</InkNote>
    </Screen>
  );
}
